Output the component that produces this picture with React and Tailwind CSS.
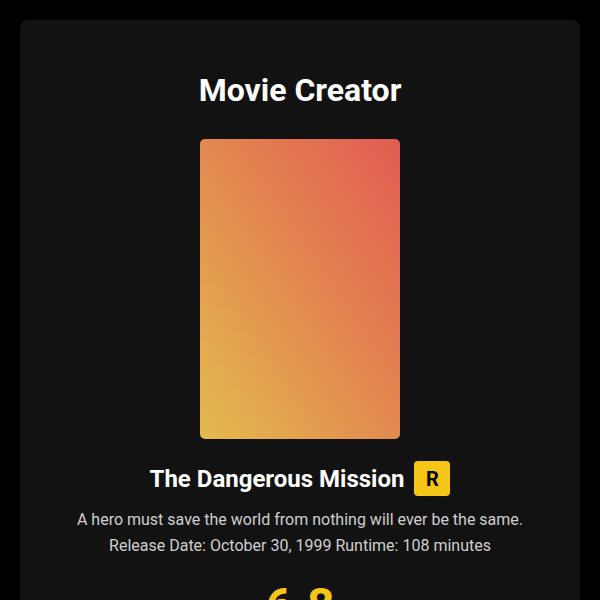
export default function App() {
    const movie = {
        title: "The Dangerous Mission",
        rating: "R",
        description: "A hero must save the world from nothing will ever be the same.",
        releaseDate: "October 30, 1999",
        runtime: 108,
        score: "6.8",
    };

    return (
        <div className="min-h-[600px] bg-black p-5 font-['Roboto',sans-serif]">
            <div className="bg-[#121212] rounded-lg pt-[50px] pb-10 flex flex-col items-center">
                <h1 className="text-[32px] leading-[40px] font-bold text-white">Movie Creator</h1>
                <div className="mt-[29px] w-[200px] h-[300px] rounded-[5px] bg-gradient-to-tr from-[#e2bb4e] via-[#e2894f] to-[#e25a52]"></div>
                <div className="mt-[22px] flex items-center gap-[10px]">
                    <h2 className="text-[24px] leading-[30px] font-bold text-white">{movie.title}</h2>
                    <span className="w-[36px] h-[35px] rounded-[4px] bg-[#f5c518] text-black text-[20px] font-bold flex items-center justify-center">{movie.rating}</span>
                </div>
                <p className="mt-[11px] text-[16px] leading-[26px] text-[#cfcfcf]">{movie.description}</p>
                <p className="text-[16px] leading-[26px] text-[#cfcfcf]">Release Date: {movie.releaseDate} Runtime: {movie.runtime} minutes</p>
                <div className="mt-[19px] text-[48px] leading-[56px] font-bold text-[#f5c518]">{movie.score}</div>
            </div>
        </div>
    );
}
